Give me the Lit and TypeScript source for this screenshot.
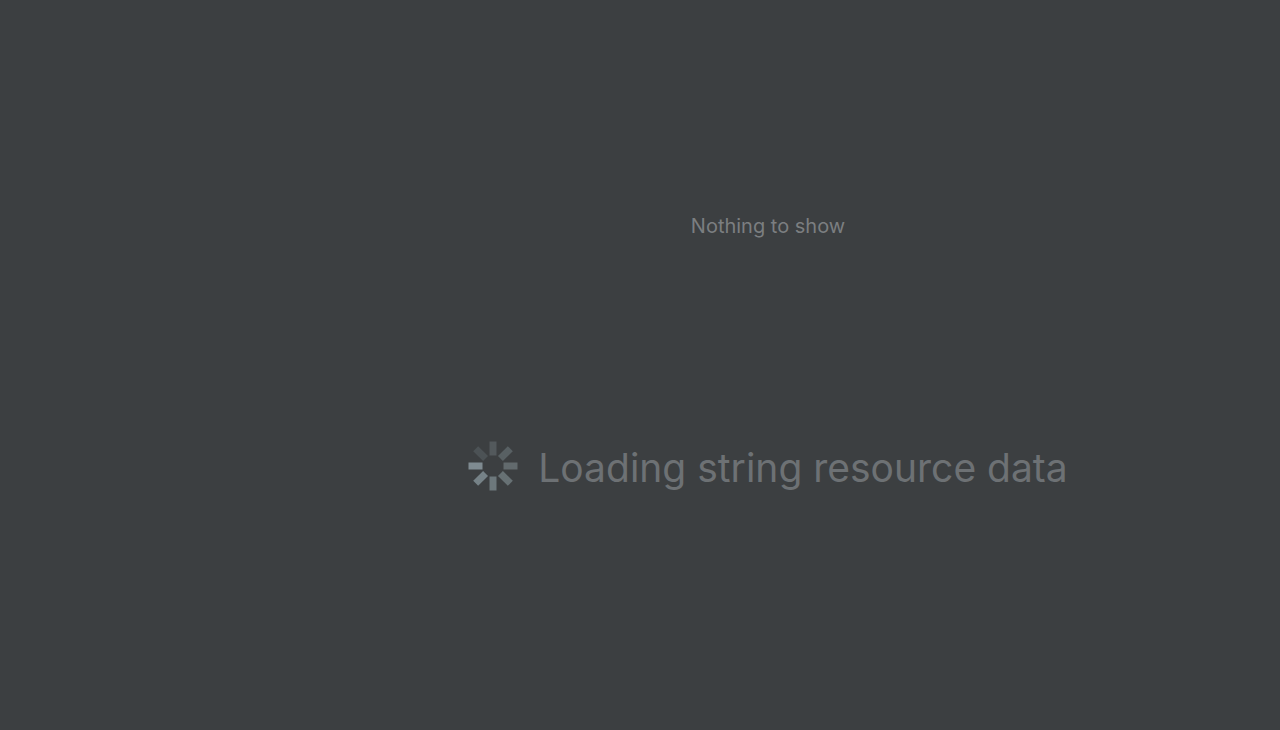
import { LitElement, html, css, svg } from "lit";
import { customElement } from "lit/decorators.js";

const SPOKES = [
  { angle: 0, fill: "#53595c" },
  { angle: 45, fill: "#586063" },
  { angle: 90, fill: "#626a6d" },
  { angle: 135, fill: "#677174" },
  { angle: 180, fill: "#6d787c" },
  { angle: 225, fill: "#768287" },
  { angle: 270, fill: "#7f8b91" },
  { angle: 315, fill: "#4c5255" },
];

@customElement("loading-spinner")
class LoadingSpinner extends LitElement {
  static styles = css`
    :host { display: block; flex: none; width: 50px; height: 50px; }
    svg { display: block; width: 100%; height: 100%; }
  `;
  render() {
    return html`<svg viewBox="-25 -25 50 50" aria-hidden="true">
      ${SPOKES.map(
        (s) => svg`<rect x="-3.5" y="-24.5" width="7" height="14" fill=${s.fill} transform="rotate(${s.angle})"></rect>`
      )}
    </svg>`;
  }
}

@customElement("app-root")
class AppRoot extends LitElement {
  static styles = css`
    :host {
      display: block;
      min-height: 100vh;
      box-sizing: border-box;
      padding: 212px 0 40px 20%;
      background: #3c3f41;
      font-family: Inter, "Liberation Sans", sans-serif;
    }
    main { display: flex; flex-direction: column; align-items: center; gap: 200px; }
    p { margin: 0; white-space: nowrap; }
    .empty { font-size: 20px; line-height: 28px; color: #7b7e80; }
    .loading { display: flex; align-items: center; gap: 20px; }
    .message { padding-top: 4px; font-size: 39px; line-height: 48px; color: #6d7174; }
  `;
  render() {
    return html`<main>
      <p class="empty">Nothing to show</p>
      <div class="loading" role="status">
        <loading-spinner></loading-spinner>
        <p class="message">Loading string resource data</p>
      </div>
    </main>`;
  }
}
